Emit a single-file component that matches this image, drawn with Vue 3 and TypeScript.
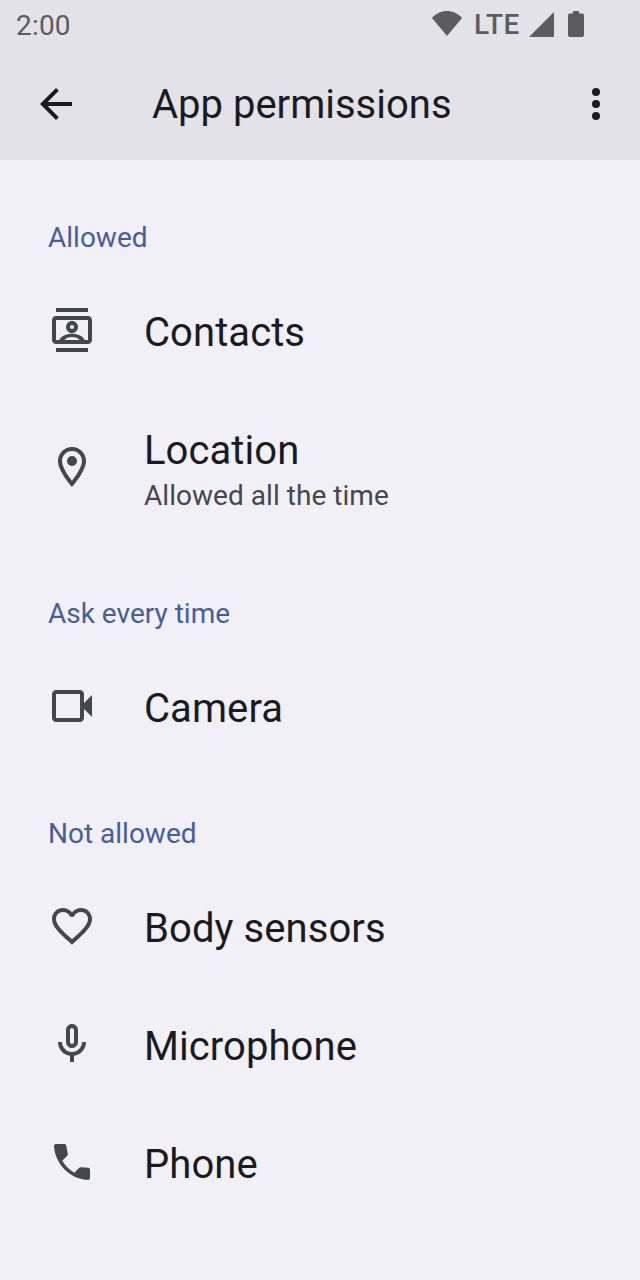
<script setup lang="ts">
interface Permission {
  name: string
  note?: string
  paths: string[]
}
interface Section {
  title: string
  items: Permission[]
}

const sections: Section[] = [
  {
    title: 'Allowed',
    items: [
      {
        name: 'Contacts',
        paths: [
          'M20 5H4c-1.1 0-2 .9-2 2v10c0 1.1.9 2 2 2h16c1.1 0 2-.9 2-2V7c0-1.1-.9-2-2-2zM8.21 17c.63-.84 2.2-1.5 3.79-1.5s3.16.66 3.79 1.5H8.21zM20 17h-1.7c-.7-1.9-3.4-3.1-6.3-3.1s-5.600 1.2-6.300 3.100H4V7h16v10z',
          'M12 7.500c-1.650 0-3 1.350-3 3s1.350 3 3 3 3-1.350 3-3-1.350-3-3-3zm0 4c-.55 0-1-.45-1-1s.45-1 1-1 1 .45 1 1-.45 1-1 1z',
          'M4 1h16v2H4zM4 21h16v2H4z',
        ],
      },
      {
        name: 'Location',
        note: 'Allowed all the time',
        paths: [
          'M12 2C8.130 2 5 5.130 5 9c0 5.250 7 13 7 13s7-7.750 7-13c0-3.870-3.130-7-7-7zM7 9c0-2.760 2.240-5 5-5s5 2.240 5 5c0 2.880-2.880 7.190-5 9.880C9.920 16.210 7 11.850 7 9z',
          'M12 6.500a2.500 2.500 0 1 0 0 5a2.500 2.500 0 1 0 0-5z',
        ],
      },
    ],
  },
  {
    title: 'Ask every time',
    items: [
      {
        name: 'Camera',
        paths: [
          'M18 10.480V6c0-1.100-.9-2-2-2H4c-1.100 0-2 .9-2 2v12c0 1.100.9 2 2 2h12c1.100 0 2-.9 2-2v-4.480l4 3.980v-11l-4 3.980zM16 18H4V6h12v12z',
        ],
      },
    ],
  },
  {
    title: 'Not allowed',
    items: [
      {
        name: 'Body sensors',
        paths: [
          'M16.500 3c-1.740 0-3.410.81-4.500 2.090C10.910 3.810 9.240 3 7.500 3 4.420 3 2 5.420 2 8.500c0 3.780 3.400 6.860 8.550 11.540L12 21.350l1.450-1.320C18.600 15.360 22 12.280 22 8.500 22 5.420 19.580 3 16.500 3zm-4.400 15.550l-.1.1-.1-.1C7.140 14.240 4 11.390 4 8.500 4 6.500 5.500 5 7.500 5c1.540 0 3.040.99 3.570 2.360h1.870C13.460 5.990 14.960 5 16.500 5c2 0 3.500 1.500 3.500 3.500 0 2.890-3.140 5.740-7.900 10.050z',
        ],
      },
      {
        name: 'Microphone',
        paths: [
          'M12 14c1.660 0 3-1.340 3-3V5c0-1.660-1.340-3-3-3S9 3.340 9 5v6c0 1.660 1.340 3 3 3zm-1-9c0-.55.45-1 1-1s1 .45 1 1v6c0 .55-.45 1-1 1s-1-.45-1-1V5z',
          'M17 11c0 2.760-2.240 5-5 5s-5-2.240-5-5H5c0 3.530 2.610 6.430 6 6.920V21h2v-3.080c3.390-.49 6-3.390 6-6.920h-2z',
        ],
      },
      {
        name: 'Phone',
        paths: [
          'M15.630 14.900l-2.500 2.450c-2.500-1.430-4.570-3.500-6-6l2.500-2.520c.23-.24.33-.57.27-.9L9.130 3.800C9.040 3.340 8.630 3 8.150 3H4c-.56 0-1.030.47-1 1.030.17 2.910 1.040 5.630 2.430 8.010 1.580 2.730 3.850 4.990 6.570 6.570 2.380 1.390 5.100 2.230 8 2.390.56.03 1-.44 1-1v-4.120c0-.48-.34-.89-.8-.98l-3.670-.27c-.33-.06-.66.04-.9.270z',
        ],
      },
    ],
  },
]
</script>

<template>
  <div class="screen">
    <header class="top">
      <div class="status">
        <span class="clock">2:00</span>
        <div class="indicators">
          <svg class="wifi" viewBox="0 0 30 25"><path d="M0 7C8-2.200 22-2.200 30 7L15 25z" /></svg>
          <span class="network">LTE</span>
          <svg class="signal" viewBox="0 0 25 25"><path d="M25 0v25H0z" /></svg>
          <svg class="battery" viewBox="0 0 16 26">
            <path d="M5 0h6v2.500h3q2 0 2 2V24q0 2-2 2H2q-2 0-2-2V4.500q0-2 2-2h3z" />
          </svg>
        </div>
      </div>
      <div class="toolbar">
        <svg class="back" viewBox="0 0 24 24">
          <path d="M20 11H7.830l5.590-5.590L12 4l-8 8 8 8 1.410-1.410L7.830 13H20v-2z" />
        </svg>
        <h1>App permissions</h1>
        <svg class="more" viewBox="0 0 24 24">
          <circle cx="12" cy="6" r="2" /><circle cx="12" cy="12" r="2" /><circle cx="12" cy="18" r="2" />
        </svg>
      </div>
    </header>
    <main>
      <section v-for="section in sections" :key="section.title">
        <h2>{{ section.title }}</h2>
        <div v-for="item in section.items" :key="item.name" class="row" :class="{ tall: item.note }">
          <svg class="icon" viewBox="0 0 24 24">
            <path v-for="(d, i) in item.paths" :key="i" :d="d" fill-rule="evenodd" />
          </svg>
          <div class="label">
            <span class="name">{{ item.name }}</span>
            <span v-if="item.note" class="note">{{ item.note }}</span>
          </div>
        </div>
      </section>
    </main>
  </div>
</template>

<style>
body {
  margin: 0;
  background: #f1f0f7;
}
</style>

<style scoped>
.screen {
  box-sizing: border-box;
  width: 640px;
  height: 1280px;
  overflow: hidden;
  background: #f1f0f7;
  color: #1b1b1f;
  font-family: Roboto, sans-serif;
}
svg {
  display: block;
  flex: none;
  fill: currentColor;
}
h1,
h2 {
  margin: 0;
  font-weight: 400;
}
.top {
  height: 160px;
  background: #e3e2e9;
}
.status {
  display: flex;
  justify-content: space-between;
  height: 48px;
  padding: 0 56px 0 16px;
  color: #5c5c5e;
}
.clock {
  padding-top: 9px;
  font-size: 28px;
  letter-spacing: 0.2px;
  line-height: 33px;
}
.indicators {
  display: flex;
  align-items: flex-start;
}
.wifi {
  width: 30px;
  height: 25px;
  margin-top: 11px;
}
.network {
  width: 46px;
  margin: 8px 0 0 12px;
  font-size: 28px;
  font-weight: 500;
  letter-spacing: 0.3px;
  line-height: 33px;
}
.signal {
  width: 25px;
  height: 25px;
  margin: 12px 0 0 9px;
}
.battery {
  width: 16px;
  height: 26px;
  margin: 11px 0 0 14px;
}
.toolbar {
  display: flex;
  align-items: center;
  height: 112px;
  padding: 0 20px 0 32px;
}
.back,
.more,
.icon {
  width: 48px;
  height: 48px;
}
h1 {
  flex: 1;
  padding: 2px 0 0 72px;
  font-size: 40px;
  line-height: 48px;
}
main {
  padding-top: 9px;
}
h2 {
  box-sizing: border-box;
  height: 102px;
  padding: 52px 48px 0;
  color: #475d9a;
  font-size: 28px;
  line-height: 33px;
}
.row {
  display: flex;
  align-items: center;
  height: 118px;
  padding: 0 48px;
}
.row.tall {
  height: 156px;
}
.icon {
  color: #46464f;
}
.label {
  display: flex;
  flex-direction: column;
  padding: 6px 0 0 48px;
}
.name {
  font-size: 40px;
  letter-spacing: 0.08px;
  line-height: 48px;
}
.tall .label {
  padding-top: 4px;
}
.note {
  margin-top: 4px;
  color: #46464f;
  font-size: 28px;
  letter-spacing: 0.04px;
  line-height: 33px;
}
</style>
